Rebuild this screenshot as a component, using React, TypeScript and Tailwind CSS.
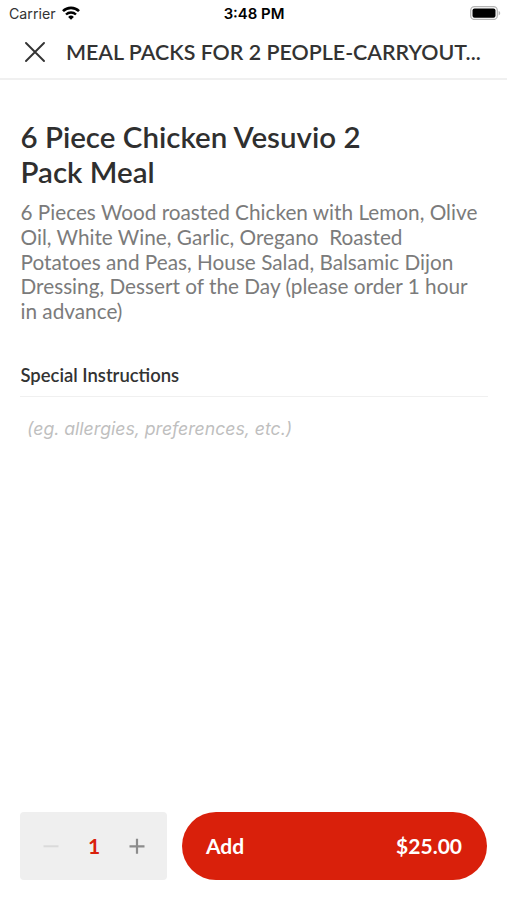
import { useState } from 'react'

function StatusBar() {
  return (
    <div className="flex h-[27px] shrink-0 items-center justify-between pl-[9px] pr-[8px] font-['Inter',sans-serif] text-black">
      <div className="flex flex-1 items-center gap-[6px]">
        <span className="text-[14.2px] text-[#333]">Carrier</span>
        <svg className="-mt-px" width="18" height="14" viewBox="0 0 18 14" fill="none" stroke="#000">
          <path d="M1 5.2a11.2 11.2 0 0 1 16 0" strokeWidth="2.6" />
          <path d="M4 8.5a7.2 7.2 0 0 1 10 0" strokeWidth="2.4" />
          <path d="M9 13.8 6.1 10.9a4.2 4.2 0 0 1 5.8 0Z" fill="#000" stroke="none" />
        </svg>
      </div>
      <span className="pt-[2px] text-[14.9px] font-semibold">3:48 PM</span>
      <div className="flex flex-1 justify-end">
        <svg className="-mr-[2px] -mt-px" width="31" height="14" viewBox="0 0 31 14">
          <rect x="0.7" y="0.7" width="26.6" height="12.8" rx="3.8" fill="#fff" stroke="#b5b5b5" strokeWidth="1.3" />
          <rect x="2.5" y="2.5" width="23" height="9.2" rx="2" fill="#000" />
          <path d="M28.6 5v4.4c1-.4 1.6-1.2 1.6-2.2s-.6-1.8-1.6-2.2Z" fill="#b5b5b5" />
        </svg>
      </div>
    </div>
  )
}

interface StepperProps {
  value: number
  onChange: (value: number) => void
}

function Stepper({ value, onChange }: StepperProps) {
  return (
    <div className="flex h-[68px] w-[147px] items-center justify-between rounded-[4px] bg-[#efefef] pl-[23px] pr-[22px]">
      <button aria-label="Decrease" disabled={value <= 1} onClick={() => onChange(value - 1)}>
        <svg width="16" height="16" viewBox="0 0 16 16" stroke="#dadada" strokeWidth="2">
          <path d="M0.5 8.3h15" />
        </svg>
      </button>
      <span className="pb-[2px] text-[21px] font-bold leading-none text-[#d9200b]">{value}</span>
      <button aria-label="Increase" onClick={() => onChange(value + 1)}>
        <svg width="16" height="16" viewBox="0 0 16 16" stroke="#8c8c8c" strokeWidth="2.2">
          <path d="M0.5 8.3h15M8 .8v15" />
        </svg>
      </button>
    </div>
  )
}

export default function App() {
  const [quantity, setQuantity] = useState(1)

  return (
    <div className="flex h-[900px] w-[507px] flex-col overflow-hidden bg-white font-['Lato',sans-serif] text-[#333]">
      <StatusBar />
      <header className="flex h-[53px] shrink-0 items-center border-b-2 border-[#f0f0f0] pb-[2px] pl-[25px]">
        <button aria-label="Close">
          <svg width="20" height="20" viewBox="0 0 20 20" stroke="#333" strokeWidth="1.9" strokeLinecap="round">
            <path d="m1 1 18 18M19 1 1 19" />
          </svg>
        </button>
        <h1 className="ml-[21px] whitespace-nowrap pt-[2px] text-[21.4px] font-semibold">MEAL PACKS FOR 2 PEOPLE-CARRYOUT...</h1>
      </header>

      <main className="flex-1 pl-[20px] pr-[19px] pt-[39px]">
        <h2 className="w-[360px] pl-[0.5px] text-[29.5px] font-semibold leading-[35px] text-[#2f2f2f]">
          6 Piece Chicken Vesuvio 2
          <br />
          Pack Meal
        </h2>
        <p className="mt-[11px] whitespace-pre pl-[0.5px] text-[20.75px] leading-[24.8px] text-[#7b7b7b]">
          {`6 Pieces Wood roasted Chicken with Lemon, Olive
Oil, White Wine, Garlic, Oregano  Roasted
Potatoes and Peas, House Salad, Balsamic Dijon
Dressing, Dessert of the Day (please order 1 hour
in advance)`}
        </p>
        <label
          htmlFor="notes"
          className="mt-[39px] block border-b border-[#f0f0f0] pb-[9px] pl-[0.5px] text-[18.45px] font-semibold leading-[24px]"
        >
          Special Instructions
        </label>
        <input
          id="notes"
          className="mt-[18px] block h-[28px] w-full pl-[7px] font-['Inter',sans-serif] text-[17.65px] italic outline-none placeholder:text-[#bfbfbf]"
          placeholder="(eg. allergies, preferences, etc.)"
        />
      </main>

      <footer className="flex shrink-0 items-center justify-between pb-[20px] pl-[20px] pr-[20px]">
        <Stepper value={quantity} onChange={setQuantity} />
        <button className="flex h-[68px] w-[305px] items-center justify-between rounded-full bg-[#d9200b] pl-[24px] pr-[25px] text-[21px] font-bold text-white">
          <span>Add</span>
          <span>${(25 * quantity).toFixed(2)}</span>
        </button>
      </footer>
    </div>
  )
}
